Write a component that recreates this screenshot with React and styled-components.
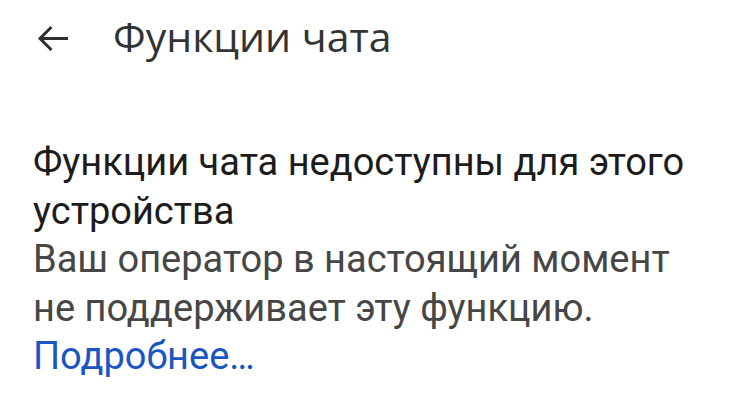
import React from "react";
import styled, { createGlobalStyle } from "styled-components";

const GlobalStyle = createGlobalStyle`
    html, body {
        margin: 0;
        padding: 0;
        background: #ffffff;
    }
    body {
        font-family: Roboto, "Liberation Sans", sans-serif;
    }
`;

const Screen = styled.div`
    width: 750px;
    height: 400px;
    overflow: hidden;
    background: #ffffff;
`;

const Toolbar = styled.div`
    display: flex;
    align-items: center;
    height: 76px;
    padding-left: 35px;
`;

const BackButton = styled.button`
    display: flex;
    align-items: center;
    justify-content: center;
    width: 36px;
    height: 36px;
    padding: 0;
    margin-right: 42px;
    border: none;
    background: none;
    color: #2f2f2f;
    cursor: pointer;
`;

const Title = styled.h1`
    margin: 0 0 4px;
    font-family: "Open Sans", Roboto, sans-serif;
    font-weight: 400;
    font-size: 41px;
    line-height: 48px;
    color: #333333;
`;

const Content = styled.div`
    padding: 62px 50px 0 33px;
`;

const Heading = styled.p`
    margin: 0;
    font-size: 38px;
    line-height: 48.5px;
    color: #1c1c1c;
`;

const Summary = styled.p`
    margin: 0;
    font-size: 38px;
    line-height: 48.5px;
    color: #464646;
`;

const MoreLink = styled.a`
    display: block;
    font-size: 38px;
    line-height: 48.5px;
    color: #1a56c2;
    text-decoration: none;
`;

const ArrowBack = () => (
    <svg width="36" height="36" viewBox="0 0 36 36" fill="none" stroke="currentColor" strokeWidth="3">
        <path d="M33 18.5H5.5" />
        <path d="M16.5 7L5 18.5L16.5 30" />
    </svg>
);

export default function App() {
    return (
        <Screen>
            <GlobalStyle />
            <Toolbar>
                <BackButton aria-label="Назад">
                    <ArrowBack />
                </BackButton>
                <Title>Функции чата</Title>
            </Toolbar>
            <Content>
                <Heading>Функции чата недоступны для этого устройства</Heading>
                <Summary>Ваш оператор в настоящий момент не поддерживает эту функцию.</Summary>
                <MoreLink href="#">Подробнее…</MoreLink>
            </Content>
        </Screen>
    );
}
